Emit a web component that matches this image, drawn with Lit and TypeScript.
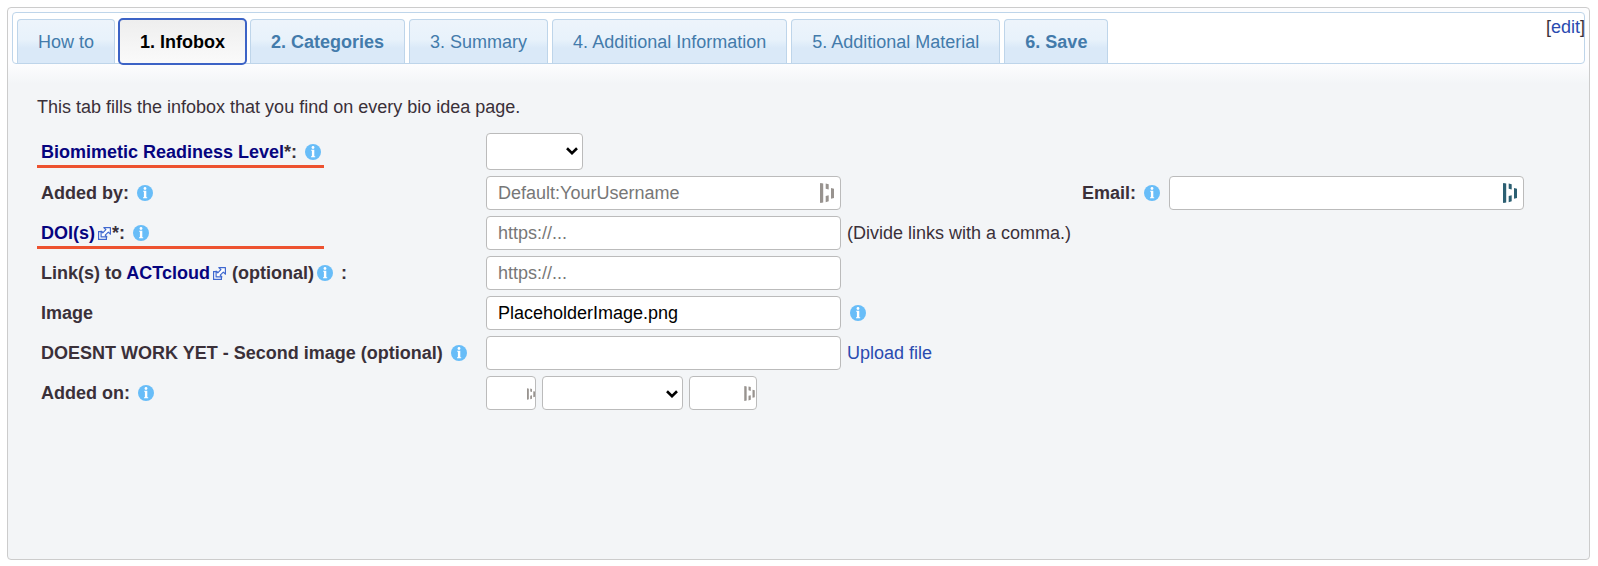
import { LitElement, html, css, svg, nothing } from "lit";
import { customElement, state } from "lit/decorators.js";
import { classMap } from "lit/directives/class-map.js";

const infoIcon = html`<svg class="info" viewBox="0 0 16 16" role="img" aria-label="Info">
  <circle cx="8" cy="8" r="8" fill="#68bdf8" />
  <circle cx="8" cy="3.5" r="1.400" fill="#fff" />
  <path d="M6.200 5.800H9.300v6.400h.9v1H6v-1h.9V6.800H6.200z" fill="#fff" />
</svg>`;

const externalIcon = html`<svg class="ext" viewBox="0 0 13 13" aria-hidden="true">
  <path d="M4.500 4.600H.6v7.800h7.800V9.200" fill="#fff" stroke="#3f68cf" stroke-width="1.200" />
  <path d="M5.800.6h6.600v6.600l-2.100-2.100L7.200 8.200l1.700 1.700H3.100V4.100L4.800 5.800l3.100-3.100z" fill="#fff" stroke="#3f68cf" stroke-width="1.200" stroke-linejoin="round" />
</svg>`;

const bars = svg`
  <path d="M0 .5 .5 0 3.200.6V19.400L.5 20 0 19.500z" />
  <path d="M5.700.5 8.700 1.300V6.500L5.700 5.800z" />
  <path d="M5.700 13 8.700 12.300V18.200L5.700 19.200z" />
  <path d="M11 5 14 5.800V15L11 15.800z" />`;

const fillIcon = (kind: string) =>
  html`<svg class="fill ${kind}" viewBox="0 0 14 20" aria-hidden="true">${bars}</svg>`;

const chevron = html`<svg class="chevron" viewBox="0 0 12 8" aria-hidden="true">
  <path d="M1 1.300 6 6.200 11 1.300" fill="none" stroke="#000" stroke-width="2.600" />
</svg>`;

interface Tab {
  name: string;
  bold?: boolean;
}

const TABS: Tab[] = [
  { name: "How to" },
  { name: "1. Infobox", bold: true },
  { name: "2. Categories", bold: true },
  { name: "3. Summary" },
  { name: "4. Additional Information" },
  { name: "5. Additional Material" },
  { name: "6. Save", bold: true },
];

@customElement("app-root")
export class AppRoot extends LitElement {
  @state() private selected = 1;

  static styles = css`
    :host {
      display: flex;
      min-height: 100vh;
      box-sizing: border-box;
      padding: 7px 8px 6px 7px;
      background: #fff;
      color: #3a3039;
      font: 18px/24px "Liberation Sans", Arial, Helvetica, sans-serif;
    }
    * {
      box-sizing: border-box;
    }
    a {
      color: #2a4bb0;
      text-decoration: none;
    }
    .panel {
      flex: 1;
      min-width: 0;
      padding: 4px;
      border: 1px solid #ccc;
      border-radius: 4px;
      background: linear-gradient(#fdfdfe 56px, #f3f5f7 76px);
    }
    .bar {
      position: relative;
      display: flex;
      gap: 4px;
      padding: 6px 4px 0;
      border: 1px solid #bed5ea;
      border-radius: 4px;
      background: #fff;
    }
    .tab {
      height: 44px;
      padding: 0 20px;
      border: 1px solid #bed5ea;
      border-bottom: 0;
      border-radius: 4px 4px 0 0;
      background: linear-gradient(#edf4fb 0, #e8f2fb 45%, #dae9f8 65%, #dae9f8);
      color: #437bab;
      font: inherit;
      white-space: nowrap;
    }
    .tab.bold {
      font-weight: bold;
    }
    .tab.on {
      position: relative;
      height: 47px;
      margin: -1px -1px -2px;
      border: 2px solid #3c63c6;
      border-radius: 5px;
      background: linear-gradient(#eee, #fafafa);
      color: #000;
    }
    .edit {
      position: absolute;
      top: 2px;
      right: -1px;
    }
    .body {
      padding: 31px 25px 24px;
    }
    .intro {
      margin: 0 0 14px;
    }
    .form {
      display: grid;
      grid-template-columns: minmax(439px, auto) minmax(590px, auto) auto 1fr;
      column-gap: 6px;
      row-gap: 6px;
      padding-left: 4px;
      align-items: center;
      justify-content: start;
    }
    .name {
      grid-column: 1;
      position: relative;
      font-weight: bold;
      white-space: nowrap;
    }
    .name a {
      color: #06047f;
    }
    .marked::after {
      content: "";
      position: absolute;
      left: -4px;
      top: 25px;
      width: 287px;
      height: 3px;
      background: #ed5230;
    }
    .aside {
      font-weight: bold;
      white-space: nowrap;
    }
    .cell {
      display: flex;
      align-items: center;
      gap: 6px;
      white-space: nowrap;
    }
    .box {
      position: relative;
      display: flex;
    }
    input,
    select {
      width: 100%;
      height: 34px;
      margin: 0;
      padding: 0 11px;
      border: 1px solid #bbb;
      border-radius: 4px;
      background: #fff;
      color: #000;
      font: inherit;
      appearance: none;
    }
    input::placeholder {
      color: #777;
      opacity: 1;
    }
    .wide {
      width: 355px;
    }
    .level {
      width: 97px;
    }
    .level select {
      height: 37px;
    }
    .day {
      width: 50px;
    }
    .month {
      width: 141px;
    }
    .year {
      width: 68px;
    }
    .info {
      width: 16px;
      height: 16px;
      margin: 0 3px;
      vertical-align: -2px;
    }
    .ext {
      width: 13px;
      height: 13px;
      margin: 0 1px 0 3px;
      vertical-align: -1px;
    }
    .fill {
      position: absolute;
      top: 7px;
      right: 7px;
      width: 14px;
      height: 20px;
      fill: #98938f;
      pointer-events: none;
    }
    .fill.dark {
      fill: #2c5f72;
    }
    .fill.mid {
      top: 10px;
      right: 2px;
      width: 11px;
      height: 15px;
    }
    .fill.small {
      top: 12px;
      right: 1px;
      width: 8px;
      height: 12px;
    }
    .chevron {
      position: absolute;
      top: 14px;
      right: 5px;
      width: 12px;
      height: 8px;
      pointer-events: none;
    }
  `;

  private tab(t: Tab, i: number) {
    const on = i === this.selected;
    return html`<button
      type="button"
      role="tab"
      aria-selected=${on ? "true" : "false"}
      class=${classMap({ tab: true, bold: !!t.bold, on })}
      @click=${() => (this.selected = i)}
    >${t.name}</button>`;
  }

  private text(id: string, size: string, opts: { hint?: string; value?: string; icon?: string; label?: string } = {}) {
    return html`<span class="box ${size}"
      ><input
        type="text"
        id=${id}
        aria-label=${opts.label ?? nothing}
        placeholder=${opts.hint ?? nothing}
        .value=${opts.value ?? ""}
      />${opts.icon ? fillIcon(opts.icon) : nothing}</span
    >`;
  }

  render() {
    return html`<main class="panel">
      <div class="bar" role="tablist">
        ${TABS.map((t, i) => this.tab(t, i))}
        <span class="edit">[<a href="#edit">edit</a>]</span>
      </div>
      <div class="body">
        <p class="intro">This tab fills the infobox that you find on every bio idea page.</p>
        <form class="form">
          <label class="name marked" for="level"><a href="#brl">Biomimetic Readiness Level</a>*: ${infoIcon}</label>
          <div class="cell">
            <span class="box level"><select id="level"><option></option></select>${chevron}</span>
          </div>

          <label class="name" for="author">Added by: ${infoIcon}</label>
          <div class="cell">${this.text("author", "wide", { hint: "Default:YourUsername", icon: "large" })}</div>
          <label class="aside" for="email">Email: ${infoIcon}</label>
          <div class="cell">${this.text("email", "wide", { icon: "dark" })}</div>

          <label class="name marked" for="doi"><a href="#doi">DOI(s)${externalIcon}</a>*: ${infoIcon}</label>
          <div class="cell">
            ${this.text("doi", "wide", { hint: "https://..." })}<span>(Divide links with a comma.)</span>
          </div>

          <label class="name" for="act">Link(s) to <a href="#act">ACTcloud${externalIcon}</a> (optional)${infoIcon} :</label>
          <div class="cell">${this.text("act", "wide", { hint: "https://..." })}</div>

          <label class="name" for="image">Image</label>
          <div class="cell">${this.text("image", "wide", { value: "PlaceholderImage.png" })}${infoIcon}</div>

          <label class="name" for="second">DOESNT WORK YET - Second image (optional) ${infoIcon}</label>
          <div class="cell">${this.text("second", "wide")}<a href="#upload">Upload file</a></div>

          <label class="name" for="day">Added on: ${infoIcon}</label>
          <div class="cell">
            ${this.text("day", "day", { icon: "small" })}
            <span class="box month"><select aria-label="Month"><option></option></select>${chevron}</span>
            ${this.text("year", "year", { icon: "mid", label: "Year" })}
          </div>
        </form>
      </div>
    </main>`;
  }
}
